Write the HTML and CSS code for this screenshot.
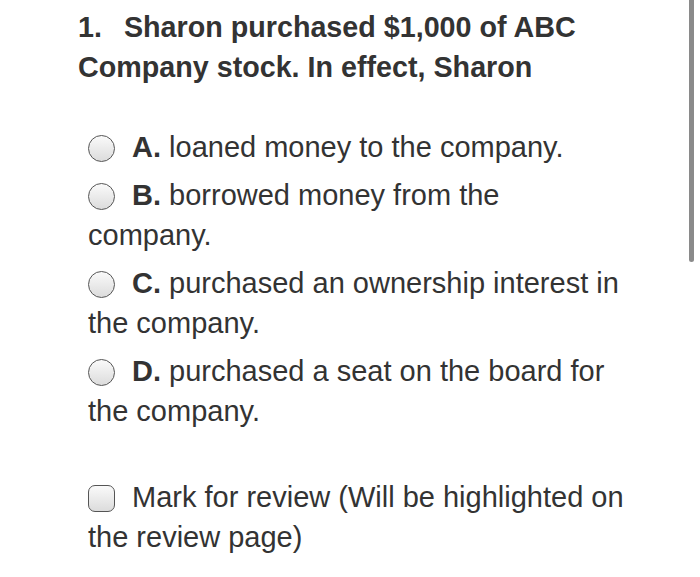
FILE: index.html
```html
<!DOCTYPE html>
<html lang="en">
<head>
    <meta charset="UTF-8">
    <meta name="viewport" content="width=device-width, initial-scale=1.0">
    <title>Question 1</title>
    <link rel="stylesheet" href="styles.css">
</head>
<body>

    <div class="question">
        <h1><span class="num">1.</span>Sharon purchased $1,000 of ABC Company stock. In effect, Sharon</h1>

        <div class="options">
            <label class="option"><span class="radio"></span><b>A.</b> loaned money to the company.</label>
            <label class="option"><span class="radio"></span><b>B.</b> borrowed money from the company.</label>
            <label class="option"><span class="radio"></span><b>C.</b> purchased an ownership interest in the company.</label>
            <label class="option"><span class="radio"></span><b>D.</b> purchased a seat on the board for the company.</label>
        </div>

        <label class="review"><span class="check"></span>Mark for review (Will be highlighted on the review page)</label>
    </div>

    <div class="scrollbar"></div>

</body>
</html>
```

FILE: styles.css
```css
body {
    margin: 0;
    background-color: #fff;
    font-family: "Liberation Sans", Arial, sans-serif;
    color: #333;
}
.question {
    padding: 7px 0 0 78px;
}
h1 {
    margin: 0;
    font-size: 28.7px;
    font-weight: 700;
    line-height: 40px;
    width: 520px;
}
h1 .num {
    margin-right: 22px;
}
.options {
    margin: 40px 0 0 10px;
    display: flex;
    flex-direction: column;
    gap: 7px;
    width: 537px;
}
.option, .review {
    display: block;
    font-size: 29px;
    line-height: 40.5px;
}
.option b {
    font-weight: 700;
}
.radio, .check {
    display: inline-block;
    width: 25px;
    height: 25px;
    border: 1.5px solid #555;
    background: linear-gradient(#fafafa, #dcdcdc);
    vertical-align: -5px;
    margin-right: 17px;
}
.radio {
    border-radius: 50%;
}
.check {
    border-radius: 7px;
}
.review {
    margin: 45px 0 0 10px;
    width: 537px;
}
.scrollbar {
    position: absolute;
    top: 0;
    left: 689px;
    width: 5px;
    height: 262px;
    background-color: #8a8a8a;
    border-radius: 0 0 3px 3px;
}
```
